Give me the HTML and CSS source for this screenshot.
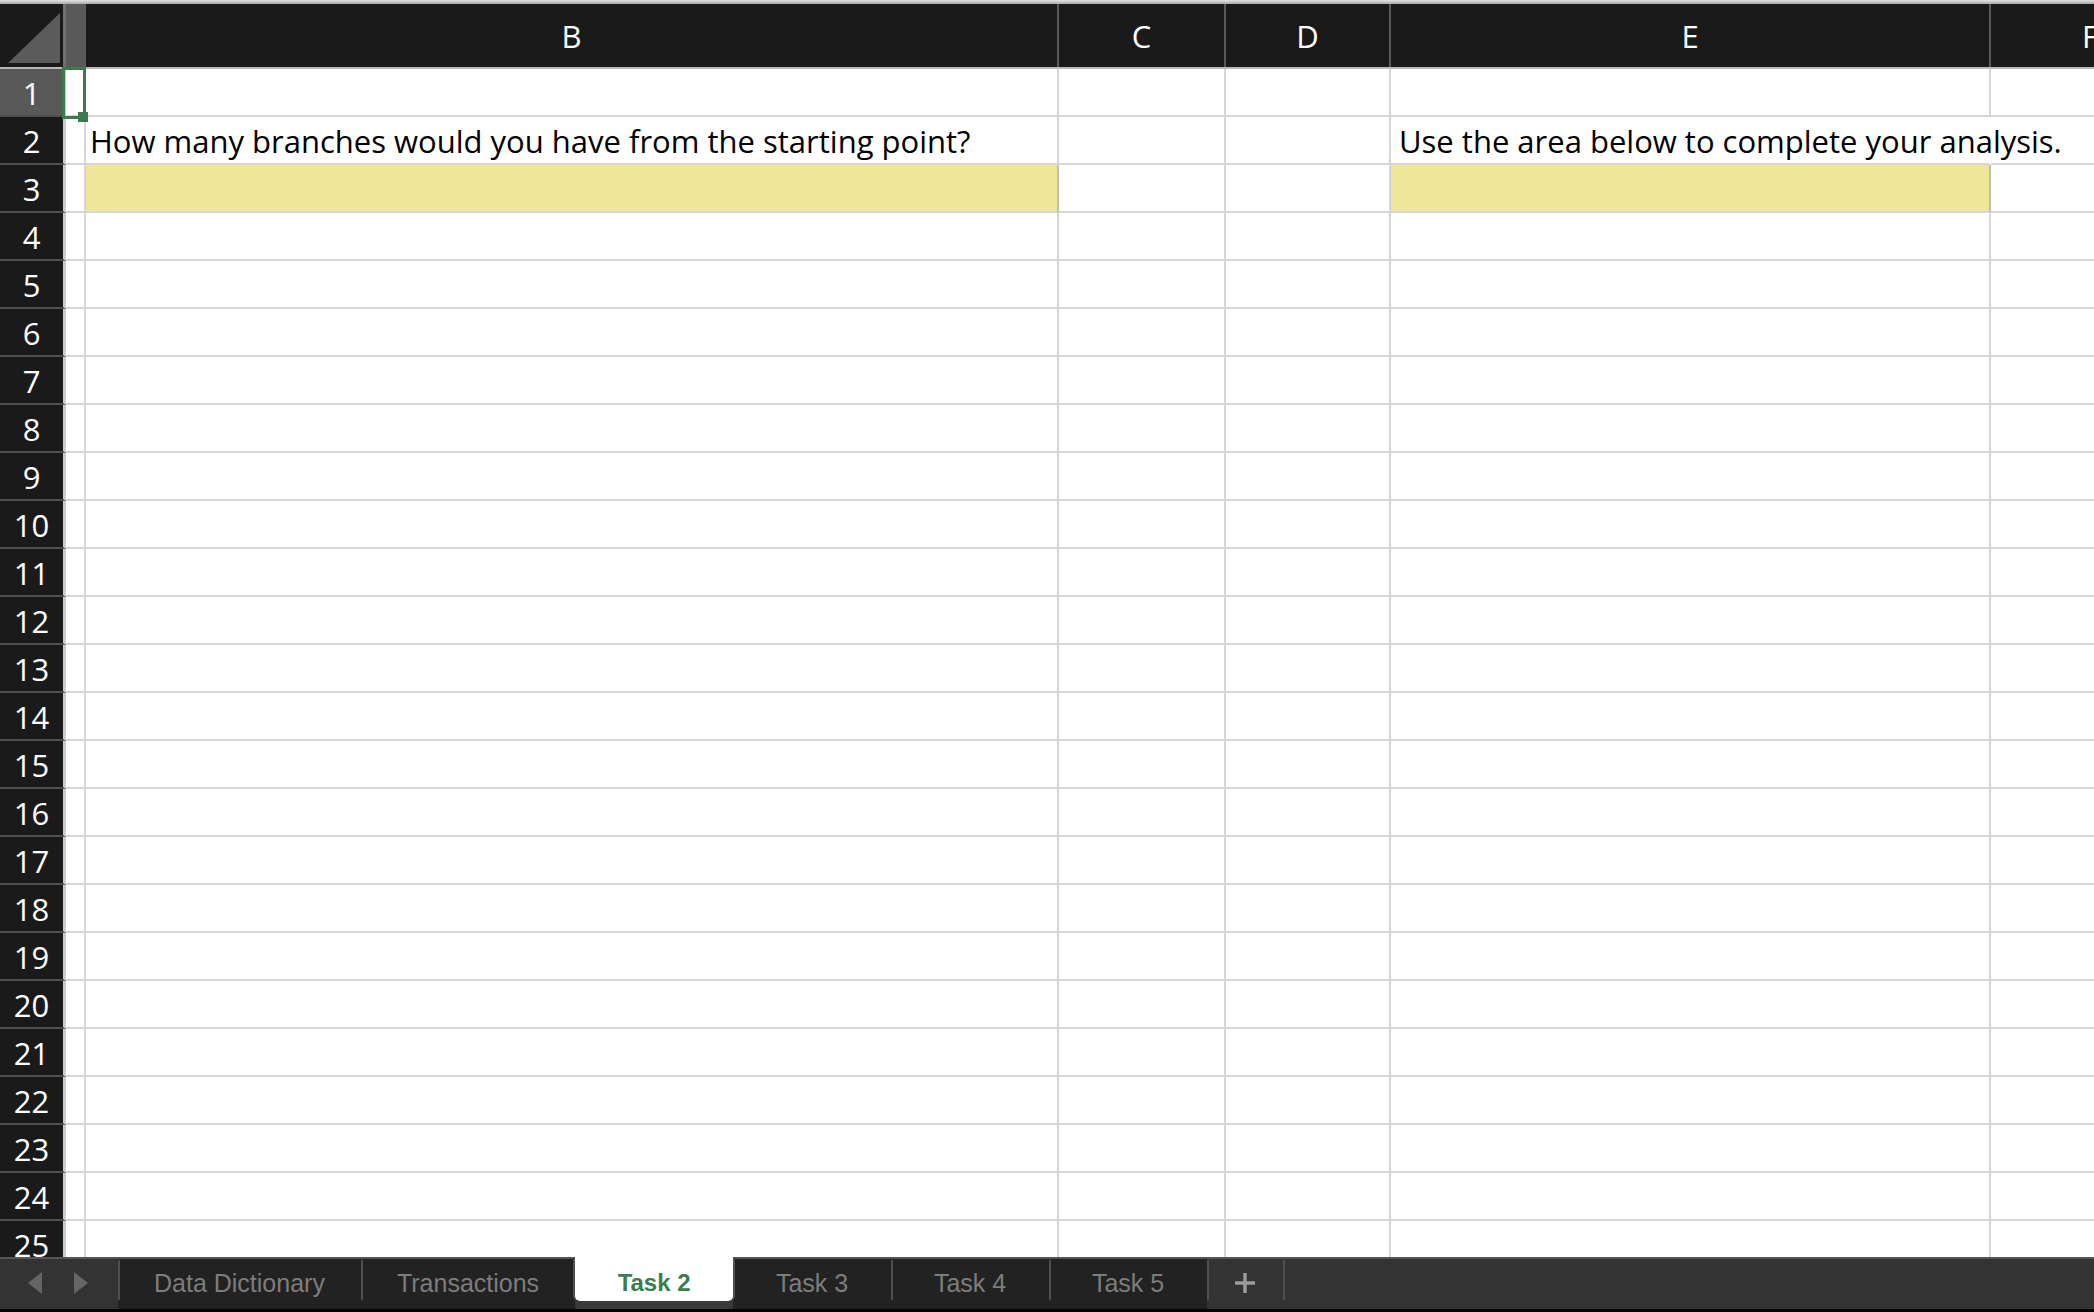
FILE: index.html
```html
<!DOCTYPE html>
<html lang="en">
<head>
<meta charset="utf-8">
<title>Task 2</title>
<link rel="stylesheet" href="styles.css">
</head>
<body>
<div class="app">
  <div class="topline"></div>
  <div class="sheet">
    <div class="hdr">
      <div class="corner">
        <svg class="tri" width="63" height="63" viewBox="0 0 63 63"><polygon points="8,59 60,9 60,59" fill="#5b5b5b"/></svg>
      </div>
      <div class="hc a sel-h"></div>
      <div class="hc b">B</div>
      <div class="hc cc">C</div>
      <div class="hc d">D</div>
      <div class="hc e">E</div>
      <div class="hc f">F</div>
    </div>
    <div class="row"><div class="rh sel-h">1</div><div class="c a"></div><div class="c b"></div><div class="c cc"></div><div class="c d"></div><div class="c e"></div><div class="c f"></div></div>
    <div class="row"><div class="rh">2</div><div class="c a"></div><div class="c b">How many branches would you have from the starting point?</div><div class="c cc"></div><div class="c d"></div><div class="c e ov">Use the area below to complete your analysis.</div><div class="c f"></div></div>
    <div class="row"><div class="rh">3</div><div class="c a"></div><div class="c b y"></div><div class="c cc"></div><div class="c d"></div><div class="c e y"></div><div class="c f"></div></div>
    <div class="row"><div class="rh">4</div><div class="c a"></div><div class="c b"></div><div class="c cc"></div><div class="c d"></div><div class="c e"></div><div class="c f"></div></div>
    <div class="row"><div class="rh">5</div><div class="c a"></div><div class="c b"></div><div class="c cc"></div><div class="c d"></div><div class="c e"></div><div class="c f"></div></div>
    <div class="row"><div class="rh">6</div><div class="c a"></div><div class="c b"></div><div class="c cc"></div><div class="c d"></div><div class="c e"></div><div class="c f"></div></div>
    <div class="row"><div class="rh">7</div><div class="c a"></div><div class="c b"></div><div class="c cc"></div><div class="c d"></div><div class="c e"></div><div class="c f"></div></div>
    <div class="row"><div class="rh">8</div><div class="c a"></div><div class="c b"></div><div class="c cc"></div><div class="c d"></div><div class="c e"></div><div class="c f"></div></div>
    <div class="row"><div class="rh">9</div><div class="c a"></div><div class="c b"></div><div class="c cc"></div><div class="c d"></div><div class="c e"></div><div class="c f"></div></div>
    <div class="row"><div class="rh">10</div><div class="c a"></div><div class="c b"></div><div class="c cc"></div><div class="c d"></div><div class="c e"></div><div class="c f"></div></div>
    <div class="row"><div class="rh">11</div><div class="c a"></div><div class="c b"></div><div class="c cc"></div><div class="c d"></div><div class="c e"></div><div class="c f"></div></div>
    <div class="row"><div class="rh">12</div><div class="c a"></div><div class="c b"></div><div class="c cc"></div><div class="c d"></div><div class="c e"></div><div class="c f"></div></div>
    <div class="row"><div class="rh">13</div><div class="c a"></div><div class="c b"></div><div class="c cc"></div><div class="c d"></div><div class="c e"></div><div class="c f"></div></div>
    <div class="row"><div class="rh">14</div><div class="c a"></div><div class="c b"></div><div class="c cc"></div><div class="c d"></div><div class="c e"></div><div class="c f"></div></div>
    <div class="row"><div class="rh">15</div><div class="c a"></div><div class="c b"></div><div class="c cc"></div><div class="c d"></div><div class="c e"></div><div class="c f"></div></div>
    <div class="row"><div class="rh">16</div><div class="c a"></div><div class="c b"></div><div class="c cc"></div><div class="c d"></div><div class="c e"></div><div class="c f"></div></div>
    <div class="row"><div class="rh">17</div><div class="c a"></div><div class="c b"></div><div class="c cc"></div><div class="c d"></div><div class="c e"></div><div class="c f"></div></div>
    <div class="row"><div class="rh">18</div><div class="c a"></div><div class="c b"></div><div class="c cc"></div><div class="c d"></div><div class="c e"></div><div class="c f"></div></div>
    <div class="row"><div class="rh">19</div><div class="c a"></div><div class="c b"></div><div class="c cc"></div><div class="c d"></div><div class="c e"></div><div class="c f"></div></div>
    <div class="row"><div class="rh">20</div><div class="c a"></div><div class="c b"></div><div class="c cc"></div><div class="c d"></div><div class="c e"></div><div class="c f"></div></div>
    <div class="row"><div class="rh">21</div><div class="c a"></div><div class="c b"></div><div class="c cc"></div><div class="c d"></div><div class="c e"></div><div class="c f"></div></div>
    <div class="row"><div class="rh">22</div><div class="c a"></div><div class="c b"></div><div class="c cc"></div><div class="c d"></div><div class="c e"></div><div class="c f"></div></div>
    <div class="row"><div class="rh">23</div><div class="c a"></div><div class="c b"></div><div class="c cc"></div><div class="c d"></div><div class="c e"></div><div class="c f"></div></div>
    <div class="row"><div class="rh">24</div><div class="c a"></div><div class="c b"></div><div class="c cc"></div><div class="c d"></div><div class="c e"></div><div class="c f"></div></div>
    <div class="row"><div class="rh">25</div><div class="c a"></div><div class="c b"></div><div class="c cc"></div><div class="c d"></div><div class="c e"></div><div class="c f"></div></div>
    <div class="sel"><span class="handle"></span></div>
  </div>
  <div class="tabs">
    <div class="nav">
      <svg width="14" height="22" viewBox="0 0 14 22"><polygon points="14,0 14,22 0,11" fill="#656565"/></svg>
      <svg width="14" height="22" viewBox="0 0 14 22"><polygon points="0,0 0,22 14,11" fill="#656565"/></svg>
    </div>
    <div class="tab">Data Dictionary</div>
    <div class="tab">Transactions</div>
    <div class="tab active">Task 2</div>
    <div class="tab after-active">Task 3</div>
    <div class="tab">Task 4</div>
    <div class="tab">Task 5</div>
    <div class="tab plus">
      <svg width="20" height="20" viewBox="0 0 20 20"><path d="M10 0V20M0 10H20" stroke="#9b9b9b" stroke-width="3.5" fill="none"/></svg>
    </div>
    <div class="rest"></div>
  </div>
</div>
</body>
</html>
```
FILE: styles.css
```css
* { box-sizing: border-box; }
html, body { margin: 0; padding: 0; }
body {
  width: 2094px;
  height: 1312px;
  overflow: hidden;
  background: #fff;
  font-family: "Open Sans", "Liberation Sans", sans-serif;
}
.app {
  display: flex;
  flex-direction: column;
  height: 1312px;
}
.topline {
  flex: none;
  height: 4px;
  background: linear-gradient(#e4e4e4, #a9a9a9);
}
.sheet {
  flex: 1;
  min-height: 0;
  overflow: hidden;
  position: relative;
}
.hdr {
  display: flex;
  height: 65px;
  background: #1a1a1a;
  border-bottom: 2px solid #b9b9b9;
}
.corner {
  flex: none;
  width: 66px;
  border-right: 3px solid #707070;
}
.tri { display: block; }
.hc {
  flex: none;
  color: #fff;
  font-size: 31px;
  line-height: 1;
  display: flex;
  justify-content: center;
  align-items: flex-end;
  padding-bottom: 15px;
  border-right: 2px solid #5a5a5a;
}
.a { width: 20px; }
.b { width: 973px; }
.cc { width: 167px; }
.d { width: 165px; }
.e { width: 600px; }
.f { width: 200px; }
.hc.sel-h { background: #595959; }

.row {
  display: flex;
  height: 48px;
}
.rh {
  flex: none;
  width: 66px;
  background: #1a1a1a;
  color: #fff;
  font-size: 31px;
  line-height: 1;
  display: flex;
  justify-content: center;
  align-items: flex-end;
  padding-bottom: 6px;
  border-right: 3px solid #cdcdcd;
  border-bottom: 2px solid #4e4e4e;
}
.rh.sel-h { background: #595959; }
.c {
  flex: none;
  display: flex;
  align-items: flex-end;
  padding: 0 0 6px 4px;
  white-space: nowrap;
  font-size: 31px;
  line-height: 1;
  color: #000;
  border-right: 2px solid #d6d6d6;
  border-bottom: 2px solid #d6d6d6;
}
.c.e { padding-left: 8px; }
.c.ov { border-right-color: transparent; overflow: visible; }
.c.y {
  background: #eee799;
  border-right-color: #bdbdbd;
}
.sel {
  position: absolute;
  left: 62px;
  top: 63px;
  width: 24px;
  height: 52px;
  border: 3px solid #3c7a4e;
}
.handle {
  position: absolute;
  left: 13px;
  top: 42px;
  width: 10px;
  height: 10px;
  background: #3c7a4e;
}

.tabs {
  flex: none;
  height: 55px;
  display: flex;
  background: #333;
  border-top: 2px solid #555;
  border-bottom: 3px solid #000;
  font-family: "Liberation Sans", Arial, sans-serif;
}
.nav {
  flex: none;
  width: 118px;
  display: flex;
  align-items: center;
  gap: 32px;
  padding: 0 0 2px 28px;
}
.nav svg { display: block; }
.tab {
  flex: none;
  position: relative;
  min-width: 158px;
  padding: 0 36px 2px;
  display: flex;
  align-items: center;
  justify-content: center;
  background: #222;
  color: #7d7d7d;
  font-size: 25px;
}
.tab::before {
  content: "";
  position: absolute;
  left: 0;
  top: 1px;
  bottom: 9px;
  width: 2px;
  background: #4f4f4f;
}
.tab.active {
  margin-top: -2px;
  height: 44px;
  padding-bottom: 0;
  padding-top: 8px;
  background: #fff;
  color: #3a7d4e;
  font-weight: bold;
  font-size: 24px;
  border-radius: 0 0 5px 5px;
  box-shadow: 0 8px 0 #3a3a3a, -2px 0 0 #4f4f4f, 2px 0 0 #4f4f4f;
  z-index: 1;
}
.tab.active::before, .tab.after-active::before { display: none; }
.tab.plus {
  min-width: 0;
  width: 76px;
  padding: 0 0 2px;
  background: #333;
}
.tab.plus svg { display: block; }
.rest {
  flex: 1;
  position: relative;
}
.rest::before {
  content: "";
  position: absolute;
  left: 0;
  top: 1px;
  bottom: 9px;
  width: 2px;
  background: #4f4f4f;
}
```
